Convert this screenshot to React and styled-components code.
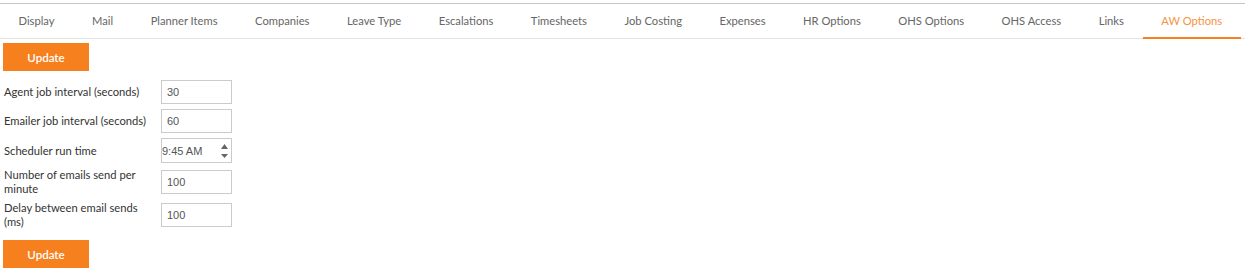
import React from 'react';
import styled, { createGlobalStyle } from 'styled-components';

const GlobalStyle = createGlobalStyle`
  body {
    margin: 0;
    font-family: Lato, "Open Sans", sans-serif;
    background: #fff;
  }
`;

// Tabs
const Page = styled.div`
  padding-top: 3px;
`;
const TabBar = styled.div`
  display: flex;
  border-top: 1px solid #c6c6c6;
  border-bottom: 1px solid #e4e4e4;
  height: 34px;
`;
const Tab = styled.div`
  padding: 0 19px 0 18.5px;
  line-height: 34px;
  font-size: 11.2px;
  color: ${props => props.active ? '#f79440' : '#666'};
  border-bottom: 2px solid ${props => props.active ? '#f7801e' : 'transparent'};
  margin-bottom: -1px;
  box-sizing: border-box;
  height: 35px;
  white-space: nowrap;
`;

// Form
const Content = styled.div`
  padding: 4px 3px;
`;
const Button = styled.button`
  display: block;
  width: 86px;
  height: 28px;
  border: none;
  background: #f7801e;
  color: #fff;
  font-family: inherit;
  font-size: 11.5px;
  font-weight: 600;
  padding: 0;
`;
const Form = styled.div`
  display: grid;
  grid-template-columns: 158px 71px;
  row-gap: 5px;
  margin: 9px 0 11px;
`;
const Label = styled.div`
  align-self: center;
  padding: 0 4px 0 1px;
  font-size: 11.2px;
  line-height: 14px;
  color: #333;
`;
const Input = styled.input`
  box-sizing: border-box;
  width: 71px;
  height: 24px;
  align-self: center;
  border: 1px solid #cbcbcb;
  padding: 0 5px;
  font-family: "Liberation Sans", Arial, sans-serif;
  font-size: 11px;
  color: #555;
  outline: none;
`;
const TimeBox = styled.div`
  box-sizing: border-box;
  display: flex;
  align-items: center;
  justify-content: space-between;
  width: 71px;
  height: 25px;
  border: 1px solid #cbcbcb;
  padding: 0 2px 0 0;
  font-family: "Liberation Sans", Arial, sans-serif;
  font-size: 11px;
  color: #555;
`;

const fields = [
  { label: 'Agent job interval (seconds)', value: '30' },
  { label: 'Emailer job interval (seconds)', value: '60' },
  { label: 'Scheduler run time', value: '9:45 AM', time: true },
  { label: 'Number of emails send per minute', value: '100' },
  { label: 'Delay between email sends (ms)', value: '100' },
];

const tabs = ['Display', 'Mail', 'Planner Items', 'Companies', 'Leave Type', 'Escalations',
  'Timesheets', 'Job Costing', 'Expenses', 'HR Options', 'OHS Options', 'OHS Access', 'Links', 'AW Options'];

const Spinner = () => (
  <svg width="9" height="20" viewBox="0 0 9 20">
    <path d="M4.5 3 L8 8 L1 8 Z" fill="#666" />
    <path d="M1 13 L8 13 L4.5 17 Z" fill="#666" />
  </svg>
);

const App = () => (
  <Page>
    <GlobalStyle />
    <TabBar>
      {tabs.map(t => <Tab key={t} active={t === 'AW Options'}>{t}</Tab>)}
    </TabBar>
    <Content>
      <Button>Update</Button>
      <Form>
        {fields.map(f => (
          <React.Fragment key={f.label}>
            <Label>{f.label}</Label>
            {f.time
              ? <TimeBox><span>{f.value}</span><Spinner /></TimeBox>
              : <Input defaultValue={f.value} />}
          </React.Fragment>
        ))}
      </Form>
      <Button>Update</Button>
    </Content>
  </Page>
);

export default App;
